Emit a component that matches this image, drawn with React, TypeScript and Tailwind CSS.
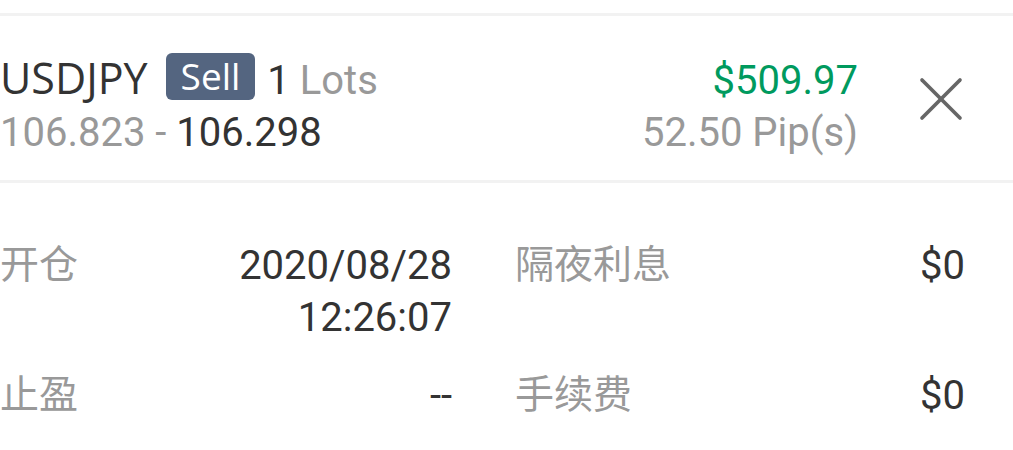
import { X } from "lucide-react";

const num = "font-['Roboto',sans-serif]";
const cjk = "font-['Noto_Sans_CJK_SC','Noto_Sans',sans-serif]";

type Item = { label: string; value: string[] };

const rows: Item[][] = [
  [
    { label: "开仓", value: ["2020/08/28", "12:26:07"] },
    { label: "隔夜利息", value: ["$0"] },
  ],
  [
    { label: "止盈", value: ["--"] },
    { label: "手续费", value: ["$0"] },
  ],
];

function DetailCell({ item }: { item: Item }) {
  return (
    <div className="flex justify-between items-start">
      <span className={`${cjk} text-[39px] leading-[42px] text-[#999999]`}>
        {item.label}
      </span>
      <div className={`${num} flex flex-col items-end text-[40px] leading-[52px] text-[#333333]`}>
        {item.value.map((v) => (
          <span key={v}>{v}</span>
        ))}
      </div>
    </div>
  );
}

export default function App() {
  return (
    <div className="w-[1013px] h-[450px] bg-white overflow-hidden pt-[13px]">
      <div className="h-[3px] bg-[#f2f2f2]" />

      {/* position header */}
      <div className="flex items-start pt-[39px] pb-[21px] pr-[34px]">
        <div className="flex flex-col grow">
          <div className="flex items-start h-[52px]">
            <span className="font-['Open_Sans',sans-serif] text-[43px] leading-[46px] text-[#333333]">
              USDJPY
            </span>
            <span className="ml-[18px] -mt-[2px] h-[47px] px-[15px] rounded-[6px] bg-[#546580] text-white font-['Open_Sans',sans-serif] text-[37px] leading-[45px]">
              Sell
            </span>
            <span className={`${num} ml-[12px] text-[40px] leading-[52px] text-[#333333]`}>
              1 <span className="text-[#999999]">Lots</span>
            </span>
          </div>
          <div className={`${num} text-[40px] leading-[52px]`}>
            <span className="text-[#999999]">106.823 - </span>
            <span className="text-[#333333]">106.298</span>
          </div>
        </div>
        <div className={`${num} flex flex-col items-end text-[40px] leading-[52px]`}>
          <span className="text-[#009a5e]">$509.97</span>
          <span className="text-[#999999]">52.50 Pip(s)</span>
        </div>
        <X
          className="ml-[45px] mt-[6px] w-[76px] h-[76px] shrink-0 text-[#666666]"
          strokeWidth={1.15}
        />
      </div>

      <div className="h-[3px] bg-[#f2f2f2]" />

      {/* details */}
      <div className="grid grid-cols-[452px_450px] gap-x-[63px] gap-y-[26px] pt-[57px]">
        {rows.flat().map((item) => (
          <DetailCell key={item.label} item={item} />
        ))}
      </div>
    </div>
  );
}
